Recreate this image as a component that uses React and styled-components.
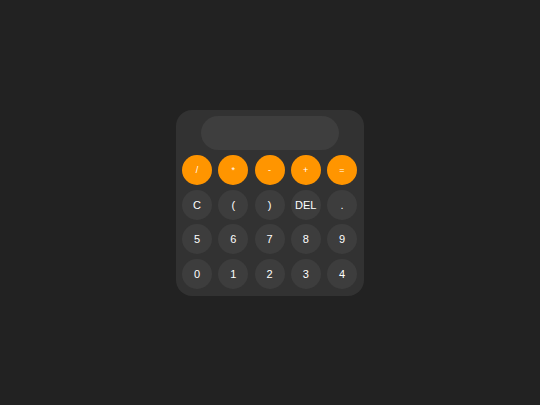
import styled, { createGlobalStyle } from "styled-components";

const Global = createGlobalStyle`
  html, body {
    margin: 0;
    background: #222222;
    font-family: "Liberation Sans", Arial, sans-serif;
  }
`;

const Page = styled.div`
  width: 540px;
  height: 405px;
  display: flex;
  justify-content: center;
  padding-top: 110px;
  box-sizing: border-box;
`;

const Calculator = styled.div`
  width: 188px;
  height: 186px;
  box-sizing: border-box;
  padding: 6px 7px 7px 6px;
  background: #323232;
  border-radius: 16px;
  display: flex;
  flex-direction: column;
  align-items: center;
  gap: 5px;
`;

const Display = styled.div`
  width: 138px;
  height: 34px;
  border-radius: 17px;
  background: #3e3e3e;
`;

const Keys = styled.div`
  width: 100%;
  display: grid;
  grid-template-columns: repeat(5, 30px);
  justify-content: space-between;
  row-gap: 4.5px;
`;

const Key = styled.button`
  width: 30px;
  height: 30px;
  border: none;
  border-radius: 50%;
  padding: 0;
  background: ${(p) => (p.$op ? "#ff9500" : "#3d3d3d")};
  color: #ffffff;
  font-family: "Liberation Sans", Arial, sans-serif;
  font-size: ${(p) => (p.$op ? "9px" : "11px")};
  display: flex;
  align-items: center;
  justify-content: center;
`;

const ops = ["/", "*", "-", "+", "="];
const rest = ["C", "(", ")", "DEL", ".", "5", "6", "7", "8", "9", "0", "1", "2", "3", "4"];

export default function App() {
  return (
    <>
      <Global />
      <Page>
        <Calculator>
          <Display />
          <Keys>
            {ops.map((k) => (
              <Key key={k} $op>
                {k}
              </Key>
            ))}
            {rest.map((k) => (
              <Key key={k}>{k}</Key>
            ))}
          </Keys>
        </Calculator>
      </Page>
    </>
  );
}
